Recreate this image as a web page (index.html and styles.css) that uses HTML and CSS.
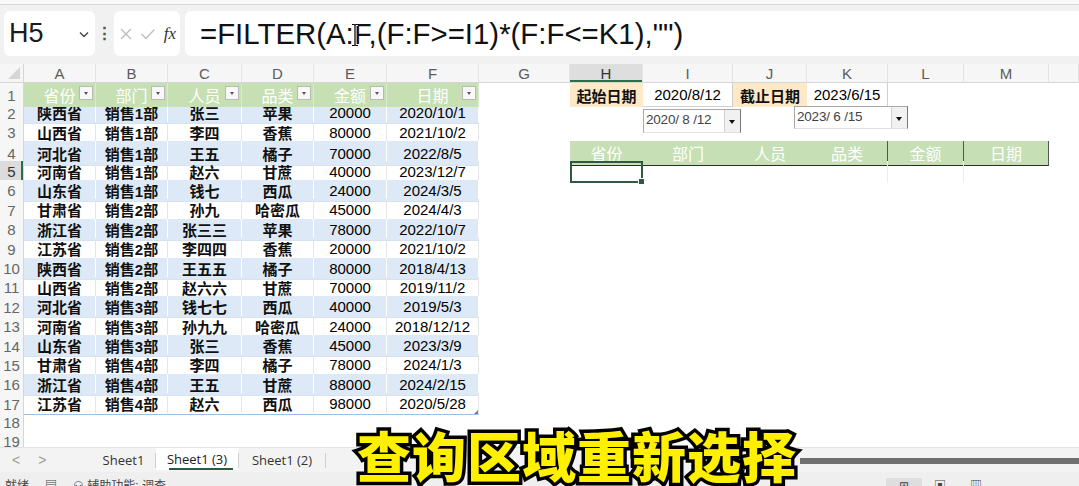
FILE: index.html
```html
<!DOCTYPE html>
<html lang="zh">
<head>
<meta charset="utf-8">
<title>Excel FILTER</title>
<link rel="stylesheet" href="styles.css">
</head>
<body>
<div class="app">
  <div class="topstrip"></div>
  <div class="fbar">
    <div class="namebox"><span class="nb-text">H5</span>
      <svg class="chev" width="10" height="7" viewBox="0 0 10 7"><path d="M1 1.5 L5 5.5 L9 1.5" fill="none" stroke="#444" stroke-width="1.4"/></svg>
    </div>
    <div class="dots">⋮</div>
    <div class="fxbox">
      <svg width="14" height="14" viewBox="0 0 14 14"><path d="M2 2 L12 12 M12 2 L2 12" stroke="#bdbdbd" stroke-width="1.3"/></svg>
      <svg width="16" height="14" viewBox="0 0 16 14"><path d="M1.5 7 L6 11.5 L14.5 2.5" fill="none" stroke="#bdbdbd" stroke-width="1.3"/></svg>
      <span class="fx">fx</span>
    </div>
    <div class="formula"><span class="ftext">=FILTER(A:F,(F:F&gt;=I1)*(F:F&lt;=K1),"")</span></div>
  </div>

  <div class="sheet">
    <div class="r ch">
      <div class="corner"><svg width="14" height="14" viewBox="0 0 14 14"><path d="M13 1 L13 13 L1 13 Z" fill="#d6d6d6"/></svg></div>
      <div>A</div><div>B</div><div>C</div><div>D</div><div>E</div><div>F</div><div>G</div><div class="sel">H</div><div>I</div><div>J</div><div>K</div><div>L</div><div>M</div><div></div>
    </div>

    <div class="r">
      <div class="rh">1</div>
      <div class="d hd">省份<span class="flt"></span></div>
      <div class="d hd">部门<span class="flt"></span></div>
      <div class="d hd">人员<span class="flt"></span></div>
      <div class="d hd">品类<span class="flt"></span></div>
      <div class="d hd">金额<span class="flt"></span></div>
      <div class="d hd">日期<span class="flt"></span></div>
      <div class="x lab gH">起始日期</div>
      <div class="x val">2020/8/12</div>
      <div class="x lab">截止日期</div>
      <div class="x val">2023/6/15</div>
    </div>

    <div class="r band"><div class="rh">2</div><div class="d">陕西省</div><div class="d">销售1部</div><div class="d">张三</div><div class="d">苹果</div><div class="d n">20000</div><div class="d n">2020/10/1</div></div>
    <div class="r"><div class="rh">3</div><div class="d">山西省</div><div class="d">销售1部</div><div class="d">李四</div><div class="d">香蕉</div><div class="d n">80000</div><div class="d n">2021/10/2</div></div>
    <div class="r band"><div class="rh">4</div><div class="d">河北省</div><div class="d">销售1部</div><div class="d">王五</div><div class="d">橘子</div><div class="d n">70000</div><div class="d n">2022/8/5</div>
      <div class="x rhd gH">省份</div><div class="x rhd">部门</div><div class="x rhd">人员</div><div class="x rhd dv">品类</div><div class="x rhd dv">金额</div><div class="x rhd dv">日期</div>
    </div>
    <div class="r"><div class="rh cur">5</div><div class="d">河南省</div><div class="d">销售1部</div><div class="d">赵六</div><div class="d">甘蔗</div><div class="d n">40000</div><div class="d n">2023/12/7</div>
      <div class="x active gH"></div><div class="x"></div><div class="x"></div><div class="x faint"></div><div class="x faint"></div><div class="x"></div>
    </div>
    <div class="r band"><div class="rh">6</div><div class="d">山东省</div><div class="d">销售1部</div><div class="d">钱七</div><div class="d">西瓜</div><div class="d n">24000</div><div class="d n">2024/3/5</div></div>
    <div class="r"><div class="rh">7</div><div class="d">甘肃省</div><div class="d">销售2部</div><div class="d">孙九</div><div class="d">哈密瓜</div><div class="d n">45000</div><div class="d n">2024/4/3</div></div>
    <div class="r band"><div class="rh">8</div><div class="d">浙江省</div><div class="d">销售2部</div><div class="d">张三三</div><div class="d">苹果</div><div class="d n">78000</div><div class="d n">2022/10/7</div></div>
    <div class="r"><div class="rh">9</div><div class="d">江苏省</div><div class="d">销售2部</div><div class="d">李四四</div><div class="d">香蕉</div><div class="d n">20000</div><div class="d n">2021/10/2</div></div>
    <div class="r band"><div class="rh">10</div><div class="d">陕西省</div><div class="d">销售2部</div><div class="d">王五五</div><div class="d">橘子</div><div class="d n">80000</div><div class="d n">2018/4/13</div></div>
    <div class="r"><div class="rh">11</div><div class="d">山西省</div><div class="d">销售2部</div><div class="d">赵六六</div><div class="d">甘蔗</div><div class="d n">70000</div><div class="d n">2019/11/2</div></div>
    <div class="r band"><div class="rh">12</div><div class="d">河北省</div><div class="d">销售3部</div><div class="d">钱七七</div><div class="d">西瓜</div><div class="d n">40000</div><div class="d n">2019/5/3</div></div>
    <div class="r"><div class="rh">13</div><div class="d">河南省</div><div class="d">销售3部</div><div class="d">孙九九</div><div class="d">哈密瓜</div><div class="d n">24000</div><div class="d n">2018/12/12</div></div>
    <div class="r band"><div class="rh">14</div><div class="d">山东省</div><div class="d">销售3部</div><div class="d">张三</div><div class="d">香蕉</div><div class="d n">45000</div><div class="d n">2023/3/9</div></div>
    <div class="r"><div class="rh">15</div><div class="d">甘肃省</div><div class="d">销售4部</div><div class="d">李四</div><div class="d">橘子</div><div class="d n">78000</div><div class="d n">2024/1/3</div></div>
    <div class="r band"><div class="rh">16</div><div class="d">浙江省</div><div class="d">销售4部</div><div class="d">王五</div><div class="d">甘蔗</div><div class="d n">88000</div><div class="d n">2024/2/15</div></div>
    <div class="r last"><div class="rh">17</div><div class="d">江苏省</div><div class="d">销售4部</div><div class="d">赵六</div><div class="d">西瓜</div><div class="d n">98000</div><div class="d n end">2020/5/28</div></div>
    <div class="r"><div class="rh">18</div></div>
    <div class="r"><div class="rh">19</div></div>
  </div>

  <div class="tabs">
    <div class="nav"><span>&lt;</span><span>&gt;</span></div>
    <div class="tab t1">Sheet1</div>
    <div class="sep"></div>
    <div class="tab on">Sheet1 (3)</div>
    <div class="sep"></div>
    <div class="tab t3">Sheet1 (2)</div>
    <div class="sep"></div>
    <div class="hscroll"></div>
  </div>
  <div class="status">
    <span class="st">就绪</span>
    <span class="st ic">▤</span>
    <span class="st">⚇ 辅助功能: 调查</span>
    <div class="views">
      <span class="vb on">⊞</span><span class="vb">▣</span><span class="vb">▥</span>
    </div>
  </div>

  <div class="picker p1"><span class="ptext">2020/ 8 /12</span><span class="pbtn"><i></i></span></div>
  <div class="picker p2"><span class="ptext">2023/ 6 /15</span><span class="pbtn"><i></i></span></div>

  <svg class="ibeam" width="10" height="24" viewBox="0 0 10 24"><path d="M2 1.5 H4 Q5 1.5 5 3 V21 Q5 22.5 4 22.5 H2 M8 1.5 H6 Q5 1.5 5 3 M5 21 Q5 22.5 6 22.5 H8" fill="none" stroke="#fff" stroke-width="3"/><path d="M2 1.5 H4 Q5 1.5 5 3 V21 Q5 22.5 4 22.5 H2 M8 1.5 H6 Q5 1.5 5 3 M5 21 Q5 22.5 6 22.5 H8" fill="none" stroke="#000" stroke-width="1.2"/></svg>

  <div class="subtitle">查询区域重新选择</div>
</div>
</body>
</html>
```

FILE: styles.css
```css
html, body {
  margin: 0;
  padding: 0;
}
body {
  width: 1079px;
  height: 486px;
  overflow: hidden;
  background: #fff;
  font-family: "Liberation Sans", "Noto Sans CJK SC", sans-serif;
  color: #111;
}
.app {
  position: relative;
  width: 1079px;
  height: 486px;
  overflow: hidden;
  background: #fff;
}
.topstrip {
  height: 4px;
  background: #f9f9f9;
  border-bottom: 1px solid #dadada;
}

/* formula bar */
.fbar {
  height: 59px;
  box-sizing: border-box;
  background: #f1f1f1;
  display: flex;
  align-items: flex-start;
  padding: 6px 0 0 4px;
}
.namebox {
  width: 91px;
  height: 45px;
  background: #fff;
  border-radius: 6px;
  display: flex;
  align-items: center;
  box-sizing: border-box;
  padding: 0 6px 0 5px;
}
.nb-text {
  font-size: 27px;
  color: #1b1b1b;
}
.chev {
  margin-left: auto;
  margin-top: 2px;
}
.dots {
  width: 19px;
  height: 45px;
  display: flex;
  align-items: center;
  justify-content: center;
  color: #555;
  font-size: 17px;
  font-weight: bold;
}
.fxbox {
  width: 66px;
  height: 45px;
  background: #fff;
  border-radius: 6px;
  display: flex;
  align-items: center;
  box-sizing: border-box;
  padding: 0 4px 0 5px;
  gap: 7px;
}
.fx {
  font-family: "Liberation Serif", serif;
  font-style: italic;
  font-size: 17px;
  color: #333;
  margin-left: 1px;
}
.formula {
  flex: 1;
  margin-left: 5px;
  height: 45px;
  background: #fff;
  border-radius: 6px 0 0 6px;
  display: flex;
  align-items: center;
  padding-left: 15px;
}
.ftext {
  font-size: 29.4px;
  color: #111;
}

/* sheet grid */
.sheet {
  height: 383px;
  overflow: hidden;
}
.r {
  display: grid;
  grid-template-columns: 24px 72px 72px 74px 72px 73px 92px 91px 73px 90px 74px 81px 76px 85px 1fr;
  height: 19.4px;
}
.ch {
  height: 18px;
  background: #f6f6f6;
  border-bottom: 1px solid #d6d6d6;
  box-sizing: content-box;
}
.ch > div {
  display: flex;
  align-items: center;
  justify-content: center;
  font-size: 15px;
  color: #5b5b5b;
  border-right: 1px solid #e4e4e4;
}
.ch > .sel {
  background: #dedede;
  box-shadow: inset 0 -2px 0 #2e6b47;
  color: #333;
}
.ch > .corner {
  justify-content: flex-end;
  align-items: flex-end;
  padding: 0 2px 2px 0;
  border-right: 1px solid #d6d6d6;
}
.rh {
  background: #f6f6f6;
  border-right: 1px solid #d6d6d6;
  color: #666;
  font-size: 15px;
  display: flex;
  align-items: center;
  justify-content: center;
}
.rh.cur {
  background: #dcdcdc;
  box-shadow: inset -2px 0 0 #2e6b47;
  color: #333;
}
.d, .x {
  box-sizing: border-box;
  display: flex;
  align-items: center;
  justify-content: center;
  font-size: 15px;
  white-space: nowrap;
  font-weight: 700;
  color: #111;
}
.d.n {
  font-weight: 400;
  color: #000;
}
.d {
  border-right: 1px solid #e6e6e6;
  border-bottom: 1px solid #d6e2ef;
}
.band .d {
  background: #dde9f6;
  border-right-color: #ffffff;
}
.last .d {
  border-bottom: 1px solid #9dbfe3;
}
.d.end {
  position: relative;
}
.d.end::after {
  content: "";
  position: absolute;
  right: 0;
  bottom: 0;
  width: 0;
  height: 0;
  border-left: 4px solid transparent;
  border-bottom: 4px solid #5b7fa8;
}
.d.hd {
  background: #c6e0b4;
  color: #fff;
  font-size: 16px;
  font-weight: 400;
  position: relative;
  border-right: 1px solid #d9ebcc;
  border-bottom: none;
}
.flt {
  position: absolute;
  right: 2px;
  top: 3px;
  width: 14px;
  height: 14px;
  box-sizing: border-box;
  border: 1px solid #b8b8b8;
  background: #f8f8f8;
}
.flt::after {
  content: "";
  position: absolute;
  left: 4px;
  top: 5px;
  border-left: 2.5px solid transparent;
  border-right: 2.5px solid transparent;
  border-top: 3px solid #555;
}
.gH {
  grid-column: 9;
}
.x.lab {
  background: #fde8c8;
  font-weight: 700;
}
.x.val {
  border-right: 1px solid #cfcfcf;
  border-bottom: 1px solid #cfcfcf;
  font-weight: 400;
  color: #000;
}
.x.rhd {
  background: #c6dfb4;
  color: #fff;
  font-size: 16px;
  font-weight: 400;
  border-bottom: 1px solid #2b2b2b;
}
.x.rhd.dv {
  border-right: 1px solid #555;
}
.x.faint {
  border-right: 1px solid #ececec;
}
.x.active {
  border: 2px solid #2f5a42;
  position: relative;
}
.x.active::after {
  content: "";
  position: absolute;
  right: -4px;
  bottom: -4px;
  width: 5px;
  height: 5px;
  background: #2f5a42;
  border: 1px solid #fff;
}

/* tabs */
.tabs {
  height: 25px;
  box-sizing: border-box;
  background: #f3f3f3;
  border-top: 1px solid #e3e3e3;
  display: flex;
  align-items: center;
  position: relative;
}
.nav {
  width: 88px;
  display: flex;
  padding-left: 12px;
  box-sizing: border-box;
  gap: 18px;
  color: #9a9a9a;
  font-size: 14px;
}
.tab {
  height: 24px;
  display: flex;
  align-items: center;
  justify-content: center;
  font-family: "Open Sans", "Liberation Sans", sans-serif;
  font-size: 13px;
  color: #333;
}
.tab.t1 {
  width: 67px;
  padding-left: 4px;
  box-sizing: border-box;
}
.tab.on {
  width: 82px;
  background: #fff;
  position: relative;
  color: #222;
  align-self: flex-start;
  height: 22px;
}
.tab.on::after {
  content: "";
  position: absolute;
  left: 13px;
  right: 5px;
  bottom: 0;
  height: 2px;
  background: #2c5a46;
}
.tab.t3 {
  width: 86px;
}
.sep {
  width: 1px;
  height: 15px;
  background: #cfcfcf;
}
.hscroll {
  margin-left: auto;
  width: 279px;
  height: 6px;
  background: #6f6f6f;
  align-self: flex-start;
  margin-top: 10px;
}

/* status */
.status {
  height: 14px;
  background: #efefef;
  display: flex;
  align-items: flex-start;
  overflow: hidden;
  padding-left: 5px;
  gap: 16px;
}
.st {
  font-size: 12px;
  color: #444;
  margin-top: 7px;
  line-height: 14px;
}
.views {
  margin-left: auto;
  display: flex;
  margin-right: 85px;
}
.vb {
  width: 36px;
  height: 14px;
  margin-top: 6px;
  text-align: center;
  font-size: 12px;
  line-height: 16px;
  color: #444;
}
.vb.on {
  background: #dedede;
}

/* date pickers */
.picker {
  position: absolute;
  display: flex;
  background: #fff;
  border: 1px solid #a8a8a8;
  border-right-color: #777;
  border-bottom-color: #e0e0e0;
  box-sizing: border-box;
}
.p1 {
  left: 643px;
  top: 109px;
  width: 98px;
  height: 24px;
}
.p2 {
  left: 794px;
  top: 106px;
  width: 114px;
  height: 23px;
}
.ptext {
  flex: 1;
  font-size: 13.5px;
  color: #444;
  padding: 2px 0 0 2px;
  letter-spacing: -0.2px;
}
.pbtn {
  width: 15px;
  background: #f1f1f1;
  border-left: 1px solid #d0d0d0;
  position: relative;
}
.pbtn i {
  position: absolute;
  left: 4px;
  top: 10px;
  border-left: 3.5px solid transparent;
  border-right: 3.5px solid transparent;
  border-top: 4px solid #111;
}

.ibeam {
  position: absolute;
  left: 350px;
  top: 23px;
}

/* subtitle */
.subtitle {
  position: absolute;
  left: 357px;
  top: 424px;
  font-family: "Noto Sans CJK SC", sans-serif;
  font-weight: 900;
  font-size: 54px;
  line-height: 62px;
  color: #fff000;
  -webkit-text-stroke: 7px #000;
  paint-order: stroke fill;
  letter-spacing: 1px;
  white-space: nowrap;
}
```
